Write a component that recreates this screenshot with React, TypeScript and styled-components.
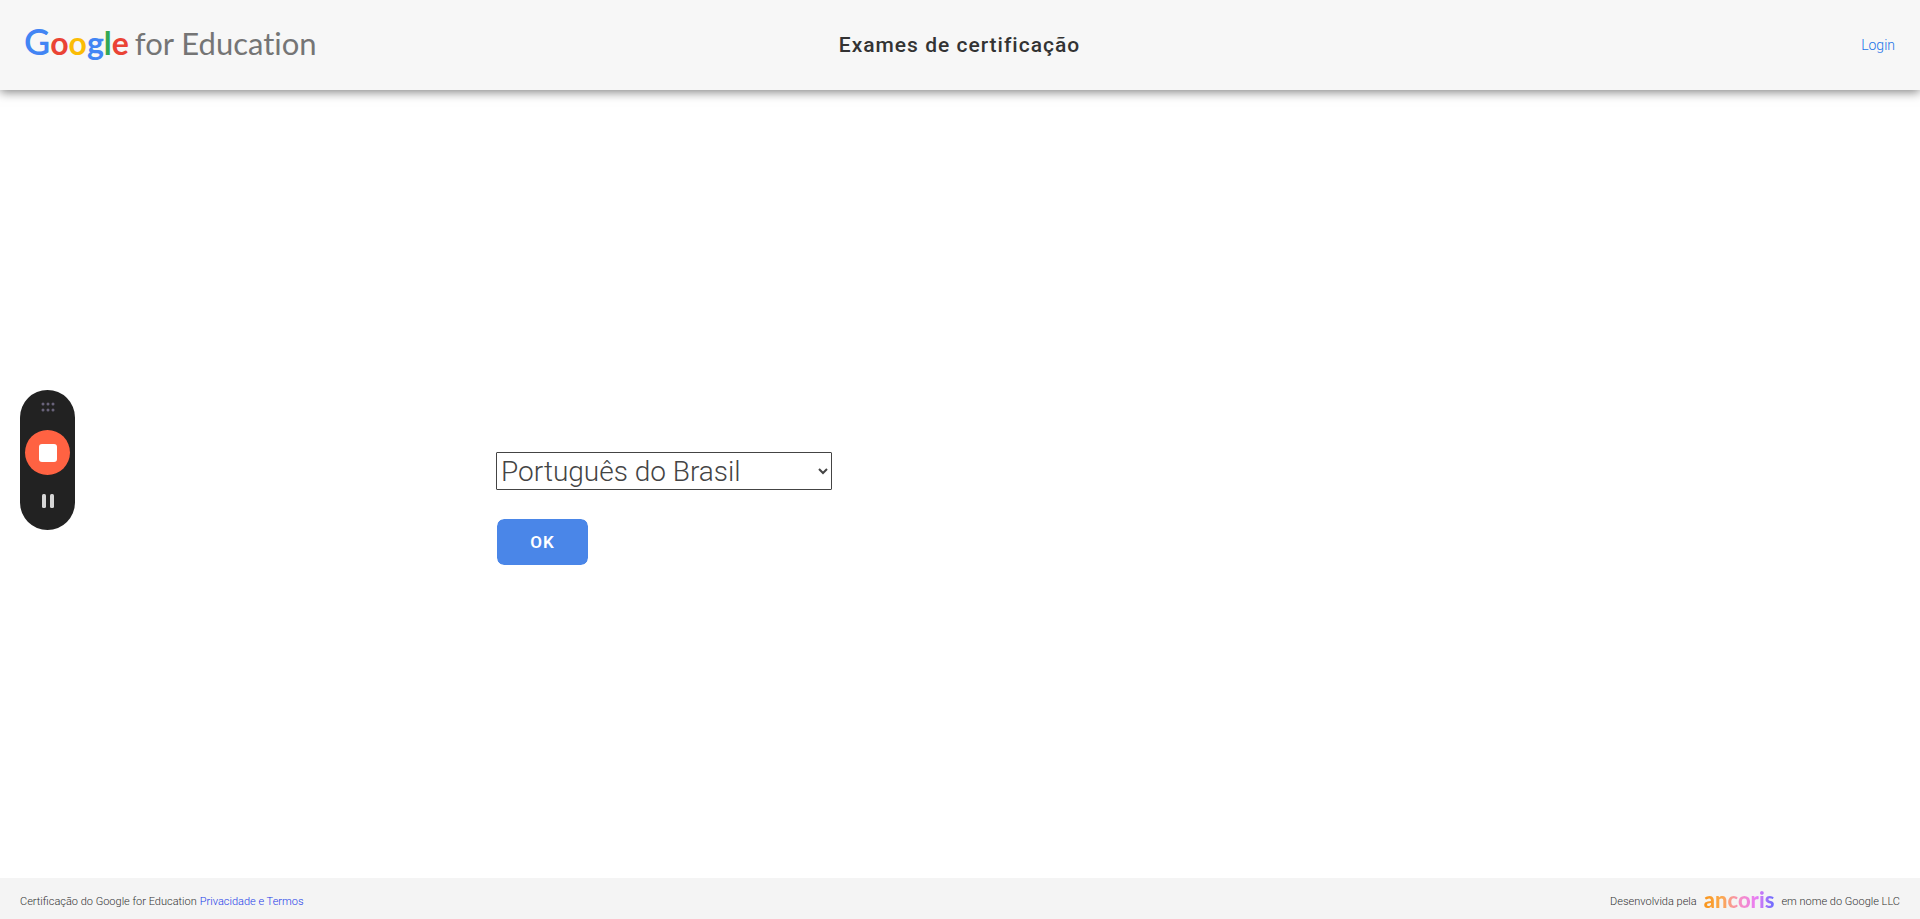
import React, { useState } from "react";
import styled, { createGlobalStyle } from "styled-components";

const GlobalStyle = createGlobalStyle`
  *, *::before, *::after { box-sizing: border-box; }
  body {
    margin: 0;
    background: #fff;
    color: #333;
    font-family: Roboto, "Liberation Sans", sans-serif;
    font-weight: 300;
  }
`;

const Page = styled.div`
  display: flex;
  flex-direction: column;
  min-height: 100vh;
`;

const Header = styled.header`
  display: grid;
  grid-template-columns: 1fr auto 1fr;
  align-items: center;
  height: 90px;
  padding: 0 25px 0 24px;
  background: #f7f7f7;
  box-shadow: 0 2px 10px rgba(0, 0, 0, 0.5);
`;

const Brand = styled.a`
  display: flex;
  align-items: baseline;
  gap: 6px;
  padding-bottom: 6px;
  color: #757575;
  font-family: Lato, sans-serif;
  font-size: 31px;
  line-height: 40px;
  font-weight: 400;
  font-variant-ligatures: none;
  text-decoration: none;
  white-space: nowrap;
`;

const Wordmark = styled.span`
  font-size: 32px;
  font-weight: 700;
`;

const Letter = styled.span<{ $color: string; $capital: boolean }>`
  color: ${({ $color }) => $color};
  font-size: ${({ $capital }) => ($capital ? "36px" : "inherit")};
  font-weight: ${({ $capital }) => ($capital ? 600 : 700)};
`;

const Title = styled.h1`
  margin: 0;
  font-size: 21px;
  line-height: 28px;
  font-weight: 500;
  letter-spacing: 1px;
`;

const LoginLink = styled.a`
  justify-self: end;
  color: #1a73e8;
  font-size: 14px;
  line-height: 20px;
  font-weight: 300;
  text-decoration: none;
`;

const Main = styled.main`
  flex: 1;
  display: flex;
  flex-direction: column;
  justify-content: center;
  padding: 50px 16px 0;
`;

const LanguageForm = styled.form`
  display: flex;
  flex-direction: column;
  align-items: flex-start;
  gap: 28px;
  width: 50%;
  margin: 0 auto;
  padding-left: 8px;
`;

const LanguageSelect = styled.select`
  width: 336px;
  max-width: 100%;
  height: 38px;
  padding: 0;
  border: 1px solid #444;
  border-radius: 1px;
  background: #fff;
  color: #444;
  font-family: inherit;
  font-size: 28px;
  font-weight: 300;
`;

const OkButton = styled.button`
  width: 93px;
  height: 48px;
  border: 1px solid #fff;
  border-radius: 8px;
  background: #4a86e8;
  background-clip: padding-box;
  color: #fff;
  font-family: inherit;
  font-size: 17px;
  font-weight: 600;
  letter-spacing: 1px;
  cursor: pointer;
`;

const Footer = styled.footer`
  display: flex;
  align-items: center;
  justify-content: space-between;
  height: 41px;
  padding: 6px 20px 0;
  background: #f4f4f4;
  font-size: 11px;
  line-height: 16px;
`;

const FooterText = styled.div`
  display: flex;
  align-items: center;
  gap: 3px;
`;

const PolicyLink = styled.a`
  color: #1a3be8;
  text-decoration: none;
`;

const Ancoris = styled.a`
  margin: 0 4px;
  padding-bottom: 4px;
  background: linear-gradient(90deg, #f9951b, #fba94c 25%, #f78fc0 50%, #e87df5 75%, #6a6cff);
  background-clip: text;
  -webkit-background-clip: text;
  color: transparent;
  font-family: Lato, sans-serif;
  font-size: 22px;
  line-height: 24px;
  font-weight: 900;
  text-decoration: none;
`;

const Recorder = styled.aside`
  position: fixed;
  top: 390px;
  left: 20px;
  display: flex;
  flex-direction: column;
  align-items: center;
  width: 55px;
  height: 140px;
  padding-top: 12px;
  border-radius: 28px;
  background: #222;
`;

const RecorderButton = styled.button<{ $stop?: boolean }>`
  display: grid;
  place-items: center;
  width: 45px;
  height: ${({ $stop }) => ($stop ? "45px" : "30px")};
  margin-top: ${({ $stop }) => ($stop ? "18px" : "11px")};
  padding: 0;
  border: 0;
  border-radius: 50%;
  background: ${({ $stop }) => ($stop ? "#ff6242" : "transparent")};
  cursor: pointer;
`;

const googleLetters: [string, string][] = [
  ["G", "#4285f4"],
  ["o", "#ea4335"],
  ["o", "#fbbc05"],
  ["g", "#4285f4"],
  ["l", "#34a853"],
  ["e", "#ea4335"],
];

export default function App() {
  const [language, setLanguage] = useState("pt-BR");

  return (
    <Page>
      <GlobalStyle />
      <Header>
        <Brand href="#">
          <Wordmark>
            {googleLetters.map(([letter, color], i) => (
              <Letter key={i} $color={color} $capital={i === 0}>{letter}</Letter>
            ))}
          </Wordmark>
          <span>for Education</span>
        </Brand>
        <Title>Exames de certificação</Title>
        <LoginLink href="#login">Login</LoginLink>
      </Header>

      <Main>
        <LanguageForm onSubmit={(e) => e.preventDefault()}>
          <LanguageSelect
            aria-label="Idioma"
            value={language}
            onChange={(e) => setLanguage(e.target.value)}
          >
            <option value="pt-BR">Português do Brasil</option>
          </LanguageSelect>
          <OkButton type="submit">OK</OkButton>
        </LanguageForm>
      </Main>

      <Footer>
        <FooterText>
          <span>Certificação do Google for Education</span>
          <PolicyLink href="#privacidade">Privacidade e Termos</PolicyLink>
        </FooterText>
        <FooterText>
          <span>Desenvolvida pela</span>
          <Ancoris href="#ancoris">ancoris</Ancoris>
          <span>em nome do Google LLC</span>
        </FooterText>
      </Footer>

      <Recorder>
        <svg width="14" height="10" viewBox="0 0 14 10" fill="#69637a" aria-hidden="true">
          <circle cx="2" cy="2" r="1.5" />
          <circle cx="7" cy="2" r="1.5" />
          <circle cx="12" cy="2" r="1.5" />
          <circle cx="2" cy="8" r="1.5" />
          <circle cx="7" cy="8" r="1.5" />
          <circle cx="12" cy="8" r="1.5" />
        </svg>
        <RecorderButton $stop type="button" aria-label="Parar">
          <svg width="18" height="18" viewBox="0 0 18 18" aria-hidden="true">
            <rect width="18" height="18" rx="3" fill="#fff" />
          </svg>
        </RecorderButton>
        <RecorderButton type="button" aria-label="Pausar">
          <svg width="12" height="14" viewBox="0 0 12 14" fill="#d6d6d6" aria-hidden="true">
            <rect width="4" height="14" rx="1.5" />
            <rect x="8" width="4" height="14" rx="1.5" />
          </svg>
        </RecorderButton>
      </Recorder>
    </Page>
  );
}
